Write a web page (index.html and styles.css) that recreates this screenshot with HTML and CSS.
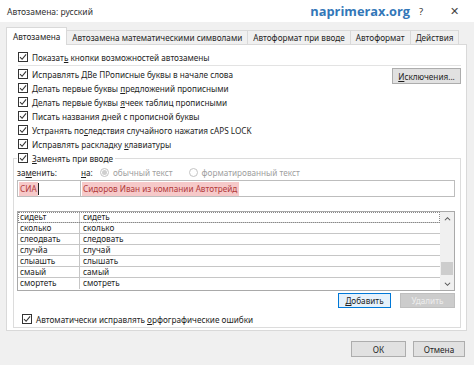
FILE: index.html
```html
<!DOCTYPE html>
<html lang="ru">
<head>
<meta charset="utf-8">
<link rel="stylesheet" href="styles.css">
</head>
<body>
<div class="titlebar">
  <span class="title">Автозамена: русский</span>
  <span class="brand">naprimerax.org</span>
  <span class="help">?</span>
  <span class="close">✕</span>
</div>
<div class="tabs">
  <div class="tab active">Автозамена</div>
  <div class="tab">Автозамена математическими символами</div>
  <div class="tab">Автоформат при вводе</div>
  <div class="tab">Автоформат</div>
  <div class="tab">Действия</div>
</div>
<div class="panel">
  <div class="row"><svg class="cb" viewBox="0 0 10 10"><rect x=".5" y=".5" width="9" height="9"/><path d="M2 5.2l2.1 2.1 4-4.9"/></svg><span>Показат<u>ь</u> кнопки возможностей автозамены</span></div>
  <div class="sep"></div>
  <div class="opts">
    <div class="opt-list">
      <div class="row"><svg class="cb" viewBox="0 0 10 10"><rect x=".5" y=".5" width="9" height="9"/><path d="M2 5.2l2.1 2.1 4-4.9"/></svg><span>Исправлять <u>Д</u>Ве ПРописные буквы в начале слова</span></div>
      <div class="row"><svg class="cb" viewBox="0 0 10 10"><rect x=".5" y=".5" width="9" height="9"/><path d="M2 5.2l2.1 2.1 4-4.9"/></svg><span>Делать первые буквы <u>п</u>редложений прописными</span></div>
      <div class="row"><svg class="cb" viewBox="0 0 10 10"><rect x=".5" y=".5" width="9" height="9"/><path d="M2 5.2l2.1 2.1 4-4.9"/></svg><span>Делать первые буквы <u>я</u>чеек таблиц прописными</span></div>
      <div class="row"><svg class="cb" viewBox="0 0 10 10"><rect x=".5" y=".5" width="9" height="9"/><path d="M2 5.2l2.1 2.1 4-4.9"/></svg><span>Писать названия <u>д</u>ней с прописной буквы</span></div>
      <div class="row"><svg class="cb" viewBox="0 0 10 10"><rect x=".5" y=".5" width="9" height="9"/><path d="M2 5.2l2.1 2.1 4-4.9"/></svg><span>Устранять по<u>с</u>ледствия случайного нажатия cAPS LOCK</span></div>
      <div class="row"><svg class="cb" viewBox="0 0 10 10"><rect x=".5" y=".5" width="9" height="9"/><path d="M2 5.2l2.1 2.1 4-4.9"/></svg><span>Исправлять раскладку <u>к</u>лавиатуры</span></div>
    </div>
    <button class="btn exc"><span><u>И</u>сключения...</span></button>
  </div>
  <fieldset class="group">
    <legend class="row"><svg class="cb" viewBox="0 0 10 10"><rect x=".5" y=".5" width="9" height="9"/><path d="M2 5.2l2.1 2.1 4-4.9"/></svg><span><u>З</u>аменять при вводе</span></legend>
    <div class="labels">
      <span class="lbl-repl">за<u>м</u>енить:</span>
      <span class="lbl-with"><u>н</u>а:</span>
      <span class="radio on"></span><span class="dis">обычный текст</span>
      <span class="radio"></span><span class="dis">форматированный текст</span>
    </div>
    <div class="inputs">
      <div class="field f-repl"><span class="hl">СИА</span><span class="caret"></span></div>
      <div class="field f-with"><span class="hl">Сидоров Иван из компании Автотрейд</span></div>
    </div>
    <div class="list">
      <div class="list-body">
        <div class="lrow first"><span class="c1">сидеьт</span><span class="c2">сидеть</span></div>
        <div class="lrow"><span class="c1">сколько</span><span class="c2">сколько</span></div>
        <div class="lrow"><span class="c1">слеодвать</span><span class="c2">следовать</span></div>
        <div class="lrow"><span class="c1">случйа</span><span class="c2">случай</span></div>
        <div class="lrow"><span class="c1">слыашть</span><span class="c2">слышать</span></div>
        <div class="lrow"><span class="c1">смаый</span><span class="c2">самый</span></div>
        <div class="lrow"><span class="c1">смортеть</span><span class="c2">смотреть</span></div>
      </div>
      <div class="scrollbar">
        <svg class="arrow" viewBox="0 0 8 5"><path d="M1 4.5l3-3 3 3"/></svg>
        <div class="thumb"></div>
        <svg class="arrow" viewBox="0 0 8 5"><path d="M1 .5l3 3 3-3"/></svg>
      </div>
    </div>
    <div class="actions">
      <button class="btn add"><span><u>Д</u>обавить</span></button>
      <button class="btn del" disabled>Удалить</button>
    </div>
    <div class="row"><svg class="cb" viewBox="0 0 10 10"><rect x=".5" y=".5" width="9" height="9"/><path d="M2 5.2l2.1 2.1 4-4.9"/></svg><span>Автоматически исправлять <u>о</u>рфографические ошибки</span></div>
  </fieldset>
</div>
<div class="footer">
  <button class="btn ok">ОК</button>
  <button class="btn cancel">Отмена</button>
</div>
</body>
</html>
```

FILE: styles.css
```css
* { box-sizing: border-box; }
html, body { margin: 0; padding: 0; }
body {
  width: 474px;
  height: 365px;
  overflow: hidden;
  background: #f0f0f0;
  font-family: "Noto Sans", "Open Sans", sans-serif;
  font-size: 8.2px;
  color: #1e1e1e;
}
u { text-decoration: underline; text-underline-offset: 1px; }

.titlebar {
  height: 22px;
  background: #fff;
  display: flex;
  align-items: center;
  padding-left: 7px;
}
.title { font-size: 8.5px; color: #333; }
.brand {
  margin-left: auto;
  font-family: "Open Sans", "Noto Sans", sans-serif;
  font-weight: 700;
  font-size: 12.8px;
  color: #3277b8;
}
.help { margin-left: 9px; font-size: 9.5px; color: #333; width: 14px; }
.close { margin-left: 17px; margin-right: 15px; font-size: 10.5px; color: #444; }

.tabs {
  display: flex;
  align-items: flex-end;
  padding-left: 6px;
  margin-top: 5px;
  height: 17px;
  position: relative;
  z-index: 1;
}
.tab {
  height: 14px;
  padding: 0 5px;
  display: flex;
  align-items: center;
  border: 1px solid #d9d9d9;
  border-bottom: none;
  border-left: none;
  background: #f0f0f0;
  white-space: nowrap;
}
.tab.active {
  height: 18px;
  margin-bottom: -1px;
  background: #fff;
  border-left: 1px solid #d9d9d9;
  padding: 0 6px;
}

.panel {
  margin-left: 6px;
  width: 461px;
  height: 287px;
  background: #fff;
  border: 1px solid #d9d9d9;
  padding: 5px 5px 0 6px;
}
.row {
  height: 14px;
  display: flex;
  align-items: center;
  padding-left: 5px;
  white-space: nowrap;
}
.cb {
  width: 10px;
  height: 10px;
  margin-right: 4px;
  flex: none;
}
.cb rect { fill: #fff; stroke: #333; stroke-width: 1; }
.cb path { fill: none; stroke: #333; stroke-width: 1.1; }

.sep {
  height: 1px;
  background: #e3e3e3;
  margin: 1px 0 1px 5px;
}
.opts { display: flex; justify-content: space-between; align-items: flex-start; }
.btn {
  font-family: inherit;
  font-size: 8.2px;
  color: #1e1e1e;
  background: #e1e1e1;
  border: 1px solid #adadad;
  padding: 0;
  height: 16px;
  display: flex;
  align-items: center;
  justify-content: center;
  white-space: nowrap;
}
.exc { width: 69px; margin-top: 1px; }

.group {
  margin: 0;
  padding: 0 5px 1px 3px;
  border: 1px solid #dcdcdc;
  min-width: 0;
}
.group legend.row { padding: 0 2px 0 1px; }

.labels {
  height: 14px;
  display: flex;
  align-items: center;
  white-space: nowrap;
}
.lbl-repl { width: 64px; }
.lbl-with { width: 19px; }
.radio {
  width: 9px;
  height: 9px;
  border-radius: 50%;
  border: 1px solid #c4c4c4;
  background: #fff;
  margin-right: 4px;
  flex: none;
  display: flex;
  align-items: center;
  justify-content: center;
}
.radio.on::after {
  content: "";
  width: 5px;
  height: 5px;
  border-radius: 50%;
  background: #cfcfcf;
}
.dis { color: #a0a0a0; margin-right: 16px; }

.inputs { display: flex; margin-top: 1px; height: 17px; }
.field {
  height: 17px;
  border: 1px solid #bdbdbd;
  display: flex;
  align-items: center;
  padding-left: 1px;
  white-space: nowrap;
}
.f-repl { width: 64px; }
.f-with { flex: 1; border-left: none; }
.hl { background: #f6c9c9; height: 14px; display: flex; align-items: center; padding: 0 2px 0 1px; color: #b23a3a; }
.f-repl .hl { padding-right: 1px; }
.caret { width: 1px; height: 12px; background: #222; }

.list {
  margin-top: 14px;
  height: 80px;
  border: 1px solid #a9a9a9;
  display: flex;
}
.list-body { flex: 1; }
.lrow {
  height: 11px;
  display: flex;
  border-bottom: 1px solid #c6c6c6;
}
.lrow.first { outline: 1px dotted #888; outline-offset: -1px; }
.lrow:last-child { border-bottom: none; }
.c1 {
  width: 62px;
  border-right: 1px solid #c6c6c6;
  padding-left: 2px;
  line-height: 10px;
}
.c2 { padding-left: 3px; line-height: 10px; }
.scrollbar {
  width: 14px;
  background: #f0f0f0;
  display: flex;
  flex-direction: column;
  align-items: center;
  padding: 4px 0 3px;
}
.arrow { width: 7px; height: 5px; }
.arrow path { fill: none; stroke: #555; stroke-width: 1.2; }
.thumb { width: 12px; height: 13px; background: #cdcdcd; margin-top: auto; margin-bottom: 7px; }

.actions {
  display: flex;
  justify-content: flex-end;
  gap: 9px;
  margin-top: 2px;
  height: 15px;
}
.actions .btn { height: 15px; }
.add { width: 53px; border-color: #0078d7; background: #e5f1fb; }
.del { width: 55px; background: #cccccc; border-color: #bfbfbf; color: #eeeeee; }
.actions + .row { margin-top: 4px; }

.footer {
  display: flex;
  justify-content: flex-end;
  gap: 7px;
  padding-right: 9px;
  margin-top: 10px;
}
.ok { width: 55px; }
.cancel { width: 52px; }
```
